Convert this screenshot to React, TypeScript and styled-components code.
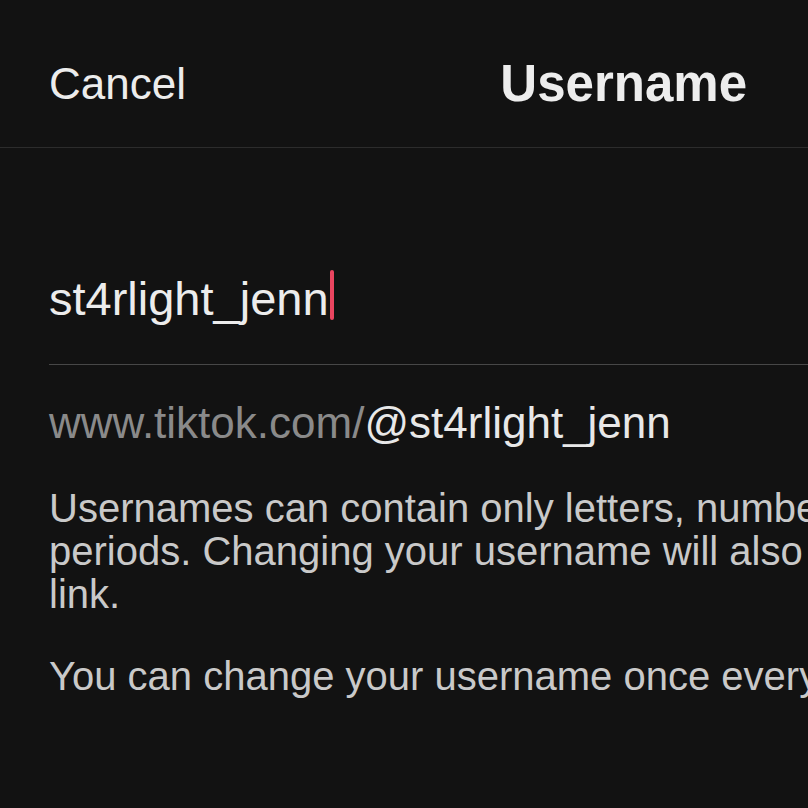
import React from 'react';
import styled, { createGlobalStyle } from 'styled-components';

const GlobalStyle = createGlobalStyle`
  html, body {
    margin: 0;
    padding: 0;
    background-color: #121212;
    overflow: hidden;
  }
  body {
    font-family: 'Liberation Sans', Arial, sans-serif;
  }
`;

const Screen = styled.div`
  width: 808px;
  height: 808px;
  background-color: #121212;
  overflow: hidden;
  display: flex;
  flex-direction: column;
`;

const Header = styled.header`
  height: 148px;
  box-sizing: border-box;
  padding: 20px 61px 0 49px;
  display: flex;
  align-items: center;
  justify-content: space-between;
  border-bottom: 1px solid #2c2c2c;
`;

const CancelButton = styled.button`
  background: none;
  border: none;
  padding: 0;
  font-family: inherit;
  font-size: 44px;
  color: #ececec;
  cursor: pointer;
`;

const Title = styled.h1`
  margin: 0;
  font-size: 51px;
  font-weight: 700;
  color: #ededed;
`;

const Body = styled.div`
  padding-left: 49px;
  display: flex;
  flex-direction: column;
`;

const InputRow = styled.div`
  margin-top: 123px;
  padding-bottom: 37px;
  width: 1200px;
  border-bottom: 1px solid #474747;
  display: flex;
  align-items: flex-start;
`;

const InputValue = styled.span`
  font-size: 47px;
  line-height: 56px;
  color: #ececec;
  white-space: nowrap;
`;

const Caret = styled.span`
  width: 4px;
  height: 50px;
  margin: -1px 0 0 1px;
  border-radius: 2px;
  background-color: #ea4560;
`;

const UrlLine = styled.div`
  margin-top: 32px;
  font-size: 44px;
  line-height: 52px;
  white-space: nowrap;
`;

const UrlPart = styled.span<{ $muted?: boolean }>`
  color: ${(p) => (p.$muted ? '#8a8a8a' : '#e8e8e8')};
`;

const Paragraph = styled.p<{ $gap: number }>`
  margin: ${(p) => p.$gap}px 0 0;
  font-size: 40px;
  line-height: 43px;
  color: #c9c9c9;
`;

const Line = styled.span`
  display: block;
  white-space: nowrap;
`;

const username = 'st4rlight_jenn';

export default function App() {
  return (
    <>
      <GlobalStyle />
      <Screen>
        <Header>
          <CancelButton>Cancel</CancelButton>
          <Title>Username</Title>
        </Header>
        <Body>
          <InputRow>
            <InputValue>{username}</InputValue>
            <Caret />
          </InputRow>
          <UrlLine>
            <UrlPart $muted>www.tiktok.com/</UrlPart>
            <UrlPart>@{username}</UrlPart>
          </UrlLine>
          <Paragraph $gap={38}>
            <Line>Usernames can contain only letters, numbers, underscores, and</Line>
            <Line>periods. Changing your username will also change your profile</Line>
            <Line>link.</Line>
          </Paragraph>
          <Paragraph $gap={39}>
            <Line>You can change your username once every 30 days.</Line>
          </Paragraph>
        </Body>
      </Screen>
    </>
  );
}
